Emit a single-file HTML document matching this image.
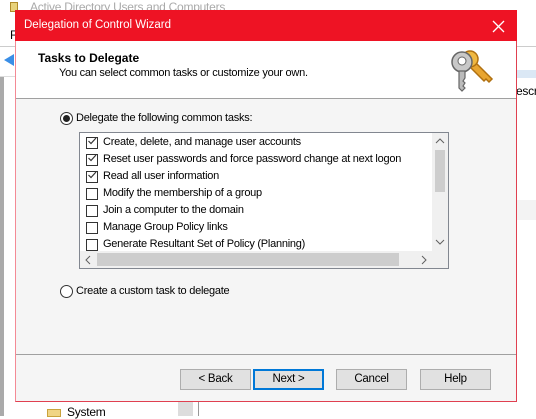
<!DOCTYPE html>
<html><head><style>
*{margin:0;padding:0;box-sizing:border-box}
body{width:536px;height:416px;overflow:hidden;background:#fff;font-family:"Liberation Sans",sans-serif;font-size:11px;letter-spacing:-0.25px;color:#000;position:relative}
.a{position:absolute}
.row{position:absolute;left:6px;height:17px;line-height:17px;white-space:nowrap}
.cb{position:absolute;left:0;top:3px;width:12px;height:12px;border:1px solid #333;background:#fff}
.row span{position:absolute;left:17px;top:0}
.btn{position:absolute;top:369px;height:21px;background:#e1e1e1;border:1px solid #adadad;text-align:center;line-height:19px;font-size:11.5px}
</style></head><body>
<div class="a" style="left:10px;top:2px;width:8px;height:10px;background:#e8d27a;border:1px solid #b08a2a"></div>
<div class="a" style="left:30px;top:0;color:#aaa;font-size:12px">Active Directory Users and Computers</div>
<div class="a" style="left:10px;top:28px;font-size:12px">F</div>
<div class="a" style="left:0;top:46px;width:536px;height:1px;background:#ccc"></div>
<div class="a" style="left:4px;top:54px;width:0;height:0;border-right:10px solid #3a8ee6;border-top:6px solid transparent;border-bottom:6px solid transparent"></div>
<div class="a" style="left:0;top:76px;width:4px;height:340px;background:#aaa"></div>
<div class="a" style="left:0;top:76px;width:536px;height:1px;background:#ddd"></div>
<div class="a" style="left:516px;top:70px;width:20px;height:8px;background:#dbe8f5"></div>
<div class="a" style="left:516px;top:84px;font-size:12px">escr</div>
<div class="a" style="left:516px;top:200px;width:20px;height:20px;background:#f3f3f3"></div>
<div class="a" style="left:178px;top:402px;width:15px;height:14px;background:#ddd"></div>
<div class="a" style="left:198px;top:402px;width:1px;height:14px;background:#999"></div>
<div class="a" style="left:47px;top:409px;width:14px;height:8px;background:#f0d585;border:1px solid #c9a33c"></div>
<div class="a" style="left:67px;top:405px;font-size:12px">System</div>
<!-- dialog -->
<div class="a" style="left:15px;top:10px;width:502px;height:392px;background:#f5f5f5;border:1px solid #e04050;border-left-color:#f48a95"></div>
<div class="a" style="left:15px;top:10px;width:502px;height:31px;background:#ee1324"></div>
<div class="a" style="left:24px;top:19px;color:#fff;font-size:11.5px;letter-spacing:0">Delegation of Control Wizard</div>
<svg class="a" style="left:492px;top:20px" width="13" height="13"><path d="M1 1L12 12M12 1L1 12" stroke="#fff" stroke-width="1.3"/></svg>
<div class="a" style="left:16px;top:41px;width:500px;height:57px;background:#fff"></div>
<div class="a" style="left:16px;top:98px;width:500px;height:1px;background:#a0a0a0"></div>
<div class="a" style="left:38px;top:51px;font-weight:bold;font-size:12px;letter-spacing:0">Tasks to Delegate</div>
<div class="a" style="left:59px;top:67px">You can select common tasks or customize your own.</div>
<!-- keys -->
<svg class="a" style="left:450px;top:45px" width="45" height="48" viewBox="0 0 45 48">
<path d="M22 14 L38 30 L42 34 L39 37 L36 34 L34 36 L32 34 L19 21" fill="#e8a530" stroke="#b07010" stroke-width="1.5"/>
<circle cx="20" cy="14" r="8" fill="#f0b840" stroke="#b07010" stroke-width="1.5"/>
<circle cx="12" cy="17" r="10" fill="#c8c8c8" stroke="#666" stroke-width="1.5"/>
<circle cx="12" cy="16" r="4" fill="#fff" stroke="#666"/>
<path d="M9 26 L9 43 L12 46 L15 43 L13 41 L15 38 L13 36 L15 33 L15 26Z" fill="#bbb" stroke="#666" stroke-width="1.2"/>
</svg>
<!-- radio 1 -->
<div class="a" style="left:60px;top:112px;width:13px;height:13px;border:1px solid #333;border-radius:50%;background:#fff"></div>
<div class="a" style="left:63px;top:115px;width:7px;height:7px;border-radius:50%;background:#222"></div>
<div class="a" style="left:76px;top:112px">Delegate the following common tasks:</div>
<!-- list -->
<div class="a" style="left:79px;top:132px;width:370px;height:137px;background:#fff;border:1px solid #828790;overflow:hidden">
 <div class="row" style="top:1px"><div class="cb"></div><span>Create, delete, and manage user accounts</span></div>
 <div class="row" style="top:18px"><div class="cb"></div><span>Reset user passwords and force password change at next logon</span></div>
 <div class="row" style="top:35px"><div class="cb"></div><span>Read all user information</span></div>
 <div class="row" style="top:52px"><div class="cb"></div><span>Modify the membership of a group</span></div>
 <div class="row" style="top:69px"><div class="cb"></div><span>Join a computer to the domain</span></div>
 <div class="row" style="top:86px"><div class="cb"></div><span>Manage Group Policy links</span></div>
 <div class="row" style="top:103px"><div class="cb"></div><span>Generate Resultant Set of Policy (Planning)</span></div>
 <div class="a" style="left:352px;top:0;width:16px;height:118px;background:#f0f0f0"></div>
 <div class="a" style="left:355px;top:17px;width:10px;height:42px;background:#cdcdcd"></div>
 <svg class="a" style="left:355px;top:5px" width="10" height="6"><path d="M1 5L5 1L9 5" fill="none" stroke="#606060"/></svg>
 <svg class="a" style="left:355px;top:106px" width="10" height="6"><path d="M1 1L5 5L9 1" fill="none" stroke="#606060"/></svg>
 <div class="a" style="left:0;top:118px;width:368px;height:17px;background:#f0f0f0"></div>
 <div class="a" style="left:17px;top:120px;width:302px;height:13px;background:#cdcdcd"></div>
 <svg class="a" style="left:5px;top:122px" width="6" height="10"><path d="M5 1L1 5L5 9" fill="none" stroke="#606060"/></svg>
 <svg class="a" style="left:341px;top:122px" width="6" height="10"><path d="M1 1L5 5L1 9" fill="none" stroke="#606060"/></svg>
</div>
<svg class="a" style="left:86px;top:135px" width="12" height="52"><g fill="none" stroke="#333" stroke-width="1.2"><path d="M2.5 6 L5 8.5 L10 3"/><path d="M2.5 23 L5 25.5 L10 20"/><path d="M2.5 40 L5 42.5 L10 37"/></g></svg>
<!-- radio 2 -->
<div class="a" style="left:60px;top:285px;width:13px;height:13px;border:1px solid #333;border-radius:50%;background:#fff"></div>
<div class="a" style="left:76px;top:285px">Create a custom task to delegate</div>
<div class="a" style="left:16px;top:354px;width:500px;height:1px;background:#a0a0a0"></div>
<div class="btn" style="left:180px;width:71px">&lt; Back</div>
<div class="btn" style="left:253px;width:71px;border:2px solid #0078d7;line-height:17px">Next &gt;</div>
<div class="btn" style="left:336px;width:71px">Cancel</div>
<div class="btn" style="left:420px;width:71px">Help</div>
</body></html>
